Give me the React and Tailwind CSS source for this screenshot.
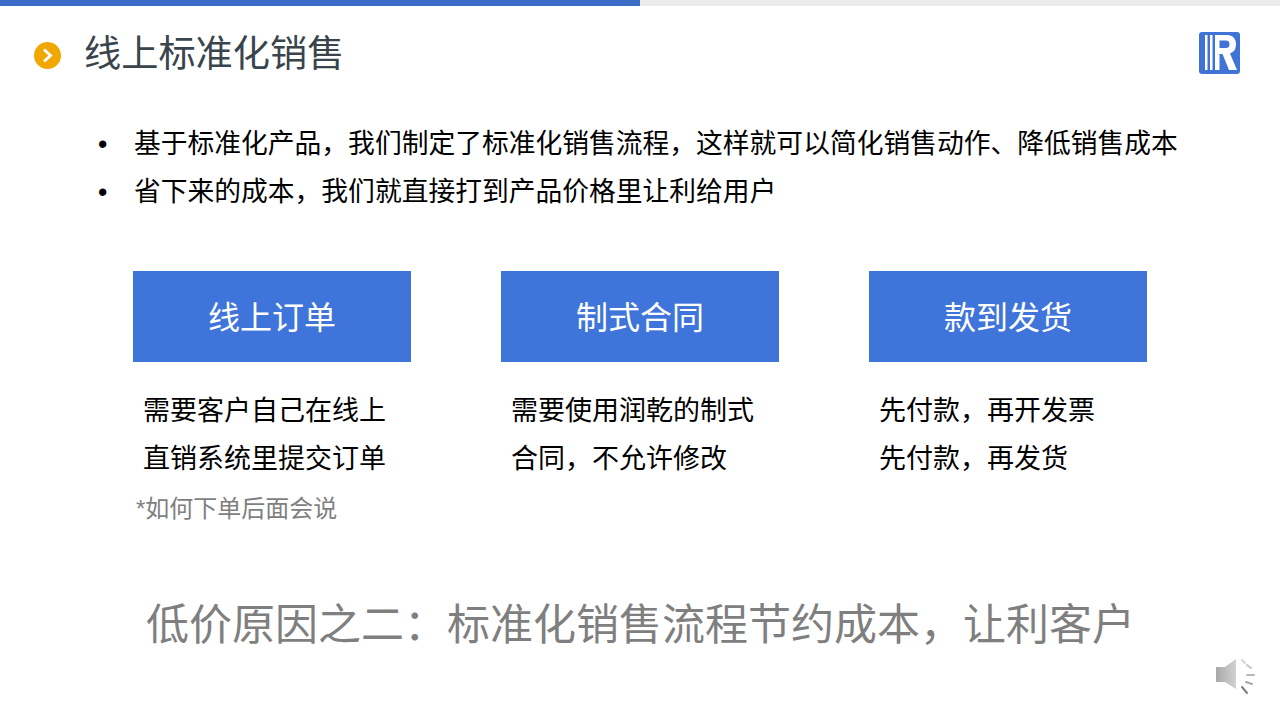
const font = "font-['Liberation_Sans','Noto_Sans_CJK_SC',sans-serif]";

function Logo() {
  return (
    <svg width="41" height="42" viewBox="0 0 41 42" className="shrink-0">
      <rect x="0" y="0" width="41" height="42" rx="3" fill="#3f73d6" />
      <rect x="6" y="3" width="2.5" height="35" fill="#fff" />
      <rect x="11" y="3" width="2.5" height="35" fill="#fff" />
      <path
        d="M16 3 H28 C34 3 37 7 37 12.5 C37 17 35 20 31 21.5 L38 38 H30 L23.5 22 H20.5 V16 H27 C29.5 16 30.5 14.5 30.5 12 C30.5 9.5 29 8.5 27 8.5 H20.5 V38 H16 Z"
        fill="#fff"
      />
    </svg>
  );
}

function Speaker() {
  return (
    <svg width="42" height="40" viewBox="0 0 42 40" className="shrink-0">
      <defs>
        <linearGradient id="cone" x1="0" y1="0" x2="1" y2="0">
          <stop offset="0" stopColor="#a8a8a8" />
          <stop offset="1" stopColor="#d2d2d2" />
        </linearGradient>
      </defs>
      <path d="M2 11 H11 L22 3 V33 L11 26 H2 Z" fill="url(#cone)" />
      <g strokeWidth="2" strokeLinecap="round">
        <path d="M28 4 L31 7" stroke="#d4d4d4" />
        <path d="M33 9 L37 12" stroke="#c4c4c4" />
        <path d="M33 19 L40 19" stroke="#b8b8b8" />
        <path d="M32 26 L38 28" stroke="#a8a8a8" />
        <path d="M28 31 L33 37" stroke="#7c7c7c" />
      </g>
    </svg>
  );
}

function StepCard({ title, lines, note }) {
  return (
    <div className="w-[278px]">
      <div className="h-[91px] pt-[2px] bg-[#3f75da] flex items-center justify-center text-white text-[32px] leading-none">
        {title}
      </div>
      <div className="mt-[25px] pl-[10px] text-[27px] leading-[48px] text-black">
        {lines.map((line) => (
          <div key={line}>{line}</div>
        ))}
      </div>
      {note && <div className="mt-[2px] pl-[3px] text-[24px] leading-[48px] text-[#7f7f7f]">{note}</div>}
    </div>
  );
}

export default function App() {
  return (
    <div className={`w-[1280px] h-[720px] bg-white overflow-hidden flex flex-col ${font}`}>
      {/* Progress bar */}
      <div className="h-[6px] flex bg-[#ebebeb]">
        <div className="w-1/2 bg-[#3a6cc8]" />
      </div>

      {/* Title row */}
      <div className="mt-[22px] h-[54px] pl-[34px] pr-[40px] flex items-center">
        <div className="w-[27px] h-[27px] rounded-full bg-[#f0a800] flex items-center justify-center">
          <svg width="15" height="15" viewBox="0 0 15 15">
            <path d="M4 1.5 L10.5 7.5 L4 13.5" fill="none" stroke="#fff" strokeWidth="3" />
          </svg>
        </div>
        <h1 className="ml-[23px] text-[37.2px] leading-none font-normal text-[#3a444c]">线上标准化销售</h1>
        <div className="ml-auto mb-[4px]">
          <Logo />
        </div>
      </div>

      {/* Bullets */}
      <ul className="mt-[38px] pl-[98px] text-[26.77px] leading-[48px] text-black">
        <li className="flex">
          <span className="w-[36px]">•</span>
          <span>基于标准化产品，我们制定了标准化销售流程，这样就可以简化销售动作、降低销售成本</span>
        </li>
        <li className="flex">
          <span className="w-[36px]">•</span>
          <span>省下来的成本，我们就直接打到产品价格里让利给用户</span>
        </li>
      </ul>

      {/* Steps */}
      <div className="mt-[55px] pl-[133px] flex gap-[90px] h-[267px]">
        <StepCard title="线上订单" lines={['需要客户自己在线上', '直销系统里提交订单']} note="*如何下单后面会说" />
        <StepCard title="制式合同" lines={['需要使用润乾的制式', '合同，不允许修改']} />
        <StepCard title="款到发货" lines={['先付款，再开发票', '先付款，再发货']} />
      </div>

      {/* Bottom line */}
      <div className="mt-[66px] pl-[146px] text-[43px] leading-none text-[#7f7f7f]">
        低价原因之二：标准化销售流程节约成本，让利客户
      </div>

      <div className="mt-[9px] pr-[24px] flex justify-end">
        <Speaker />
      </div>
    </div>
  );
}
